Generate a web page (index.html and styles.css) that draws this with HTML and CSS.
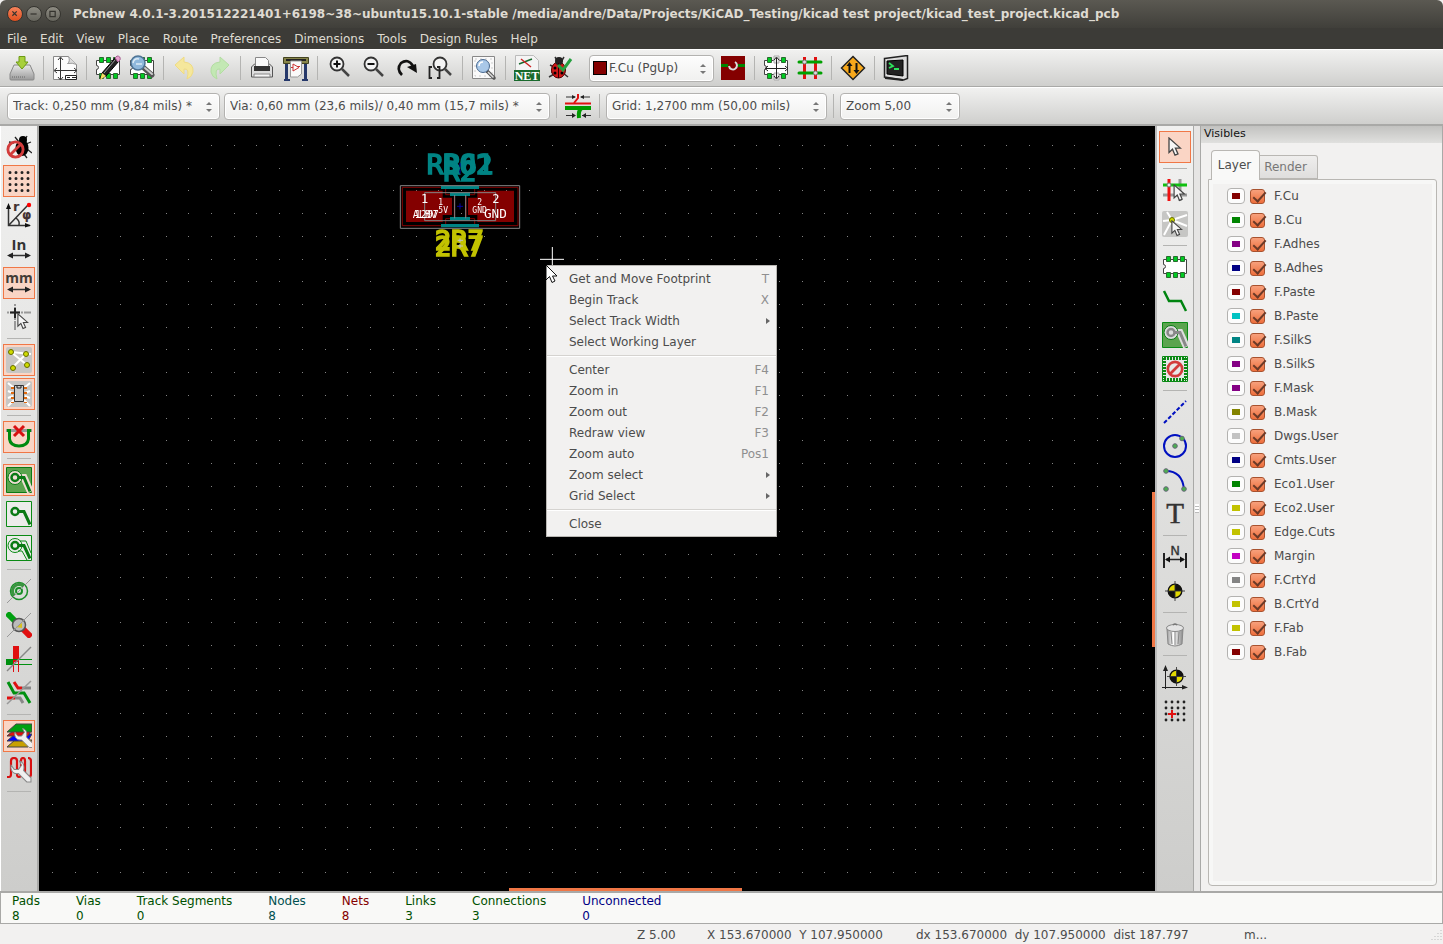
FILE: index.html
```html
<!DOCTYPE html>
<html lang="en">
<head>
    <meta charset="UTF-8">
    <meta name="viewport" content="width=device-width, initial-scale=1.0">
    <title>Pcbnew</title>
    <link rel="stylesheet" href="styles.css">
</head>
<body>
    <header class="titlebar">
        <button class="win close" aria-label="Close"><svg viewBox="0 0 16 16"><path d="M5 5l5 5m0-5l-5 5"/></svg></button>
        <button class="win" aria-label="Minimize"><svg viewBox="0 0 16 16"><path d="M4 8h7"/></svg></button>
        <button class="win" aria-label="Maximize"><svg viewBox="0 0 16 16"><path d="M4.500 5h6v6h-6z"/></svg></button>
        <h1>Pcbnew 4.0.1-3.201512221401+6198~38~ubuntu15.10.1-stable /media/andre/Data/Projects/KiCAD_Testing/kicad test project/kicad_test_project.kicad_pcb</h1>
    </header>
    <nav class="menubar">
        <a href="#">File</a><a href="#">Edit</a><a href="#">View</a><a href="#">Place</a><a href="#">Route</a><a href="#">Preferences</a><a href="#">Dimensions</a><a href="#">Tools</a><a href="#">Design Rules</a><a href="#">Help</a>
    </nav>

    <svg class="defs" width="0" height="0">
        <defs>
            <linearGradient id="tray" x2="0" y2="1"><stop offset="0" stop-color="#e8e8e8"/><stop offset="1" stop-color="#999"/></linearGradient>
            <linearGradient id="steel" x2="1" y2="0"><stop offset="0" stop-color="#999"/><stop offset=".4" stop-color="#fff"/><stop offset="1" stop-color="#888"/></linearGradient>
            <symbol id="chip" viewBox="0 0 26 26">
                <path d="M1.500 5.500h23v14h-23v-5a2 2 0 0 0 0-4z" fill="#fff" stroke="#444"/>
                <path d="M4.500 2.500h4v5h-4zM11.500 2.500h4v5h-4zM18.500 2.500h4v5h-4zM4.500 18.500h4v5h-4zM11.500 18.500h4v5h-4zM18.500 18.500h4v5h-4z" fill="#0c2" stroke="#2a6a30"/>
            </symbol>
            <symbol id="pointer" viewBox="0 0 14 20">
                <path d="M1 1v14.500l3.500-3.300 2.500 6 3-1.300-2.600-5.800h5z" fill="#f6f6f6" stroke="#444" stroke-width="1.300"/>
            </symbol>
            <symbol id="wrench" viewBox="0 0 20 22">
                <path d="M9 1l2 4-3 4-4 0-3-4C0 10 3 14 8 13l8 8h4v-4l-7-7C14 5 13 2 9 1z" fill="#f0f0f0" stroke="#888"/>
            </symbol>
            <symbol id="origin" viewBox="0 0 22 22">
                <circle cx="11" cy="11" r="7.500" fill="#e2d900" stroke="#111" stroke-width="1.500"/>
                <path d="M11 11V3.500a7.500 7.500 0 0 1 7.500 7.500zM11 11v7.500A7.500 7.500 0 0 1 3.500 11z" fill="#111"/>
                <path d="M11 0v22M0 11h22" stroke="#333"/>
            </symbol>
            <symbol id="ban" viewBox="0 0 20 20">
                <circle cx="10" cy="10" r="8" fill="none" stroke="#d33c3c" stroke-width="3"/>
                <path d="M4.500 15.500l11-11" stroke="#d33c3c" stroke-width="3"/>
            </symbol>
        </defs>
    </svg>

    <div class="toolbar">
        <button class="tool" aria-label="Save board"><svg viewBox="0 0 26 26"><path d="M5 10h16l4 9v5q0 1-1 1H2q-1 0-1-1v-5z" fill="url(#tray)" stroke="#888"/><path d="M3 22h13" stroke="#666" stroke-dasharray="1 1"/><path d="M10 1.500h6V7h3l-6 7-6-7h3z" fill="#a8d03c" stroke="#6c9a14"/></svg></button>
        <span class="sep"></span>
        <button class="tool" aria-label="Page settings"><svg viewBox="0 0 26 26"><path d="M1.500 1.500h15l8 8v15h-23z" fill="#fcfcfc" stroke="#888"/><path d="M16.500 1.500q2 5-1 7 5-1 9 1" fill="#ddd" stroke="#999"/><path d="M8.500 3v21M3 15.500h21M6 5l2.500-3L11 5M6 22l2.500 3 2.500-3M5 13l-3 2.500L5 18M22 13l3 2.500-3 2.500" fill="none" stroke="#333"/><path d="M13.500 20.500h11v4h-11z" fill="#fff" stroke="#222"/><path d="M15 22.500h3m2 0h4" stroke="#222"/></svg></button>
        <span class="sep"></span>
        <button class="tool" aria-label="Module editor"><svg viewBox="0 0 26 26"><use href="#chip"/><path d="M20 3l4 3L11 21l-6 3 2-6z" fill="#222" stroke="#000"/><path d="M9 18l11-13" stroke="#999"/><path d="M20 3l2-2q4 0 3 4l-2 2z" fill="#e8a0d0" stroke="#a55c90"/><path d="M7 18l4 3-6 4z" fill="#f4e060"/></svg></button>
        <button class="tool" aria-label="Module viewer"><svg viewBox="0 0 26 26"><use href="#chip"/><path d="M15 13l8 7" stroke="#555" stroke-width="5" stroke-linecap="round"/><path d="M16 13l7 6" stroke="#ccc" stroke-width="2" stroke-linecap="round"/><circle cx="9" cy="8" r="7" fill="#8fb8dc" stroke="#4d7394" stroke-width="1.500"/><path d="M4 8q1-5 6-4M7 9h6" stroke="#dbeaf5" stroke-width="1.500" fill="none"/></svg></button>
        <span class="sep"></span>
        <button class="tool" aria-label="Undo"><svg viewBox="0 0 26 26"><path d="M3 10l9-8v5q10 1 9 10-1 5-6 7 3-11-3-10v5z" fill="#f5e79c" stroke="#efdb83"/></svg></button>
        <button class="tool" aria-label="Redo"><svg viewBox="0 0 26 26"><path d="M23 10l-9-8v5Q4 8 5 17q1 5 6 7-3-11 3-10v5z" fill="#c3e8b4" stroke="#b3dda2"/></svg></button>
        <span class="sep"></span>
        <button class="tool" aria-label="Print"><svg viewBox="0 0 26 26"><path d="M2.500 12l3-3h15l3 3v10h-21z" fill="#ddd" stroke="#555"/><path d="M6.500 2.500h10l3 3V13h-13z" fill="#fafafa" stroke="#888"/><path d="M5 11h16v5H5z" fill="#333"/><path d="M5 19h16v3H5z" fill="#f6f6f6" stroke="#888"/></svg></button>
        <button class="tool" aria-label="Plot"><svg viewBox="0 0 26 26"><path d="M3.500 6v18M22.500 6v18" stroke="#25386a" stroke-width="3"/><path d="M1 25h6M19 25h6" stroke="#25386a" stroke-width="2"/><path d="M.5 2.500h25v6H.5z" fill="#87854a" stroke="#444420"/><path d="M3 5h20" stroke="#222" stroke-width="2"/><path d="M7.500 6h11v13l-4 3h-7z" fill="#fafafa" stroke="#999"/><path d="M10 9v7l6-3.500z" fill="none" stroke="#c33"/><path d="M8 12.500h2m4-1h3" stroke="#c33"/></svg></button>
        <span class="sep"></span>
        <button class="tool" aria-label="Zoom in"><svg viewBox="0 0 26 26"><circle cx="11" cy="9" r="6.500" fill="#f4f4f4" stroke="#333" stroke-width="1.800"/><path d="M16 14l7 7" stroke="#444" stroke-width="2.500"/><path d="M7.500 9h7M11 5.500v7" stroke="#111" stroke-width="2"/></svg></button>
        <button class="tool" aria-label="Zoom out"><svg viewBox="0 0 26 26"><circle cx="11" cy="9" r="6.500" fill="#f4f4f4" stroke="#333" stroke-width="1.800"/><path d="M16 14l7 7" stroke="#444" stroke-width="2.500"/><path d="M7.500 9h7" stroke="#111" stroke-width="2"/></svg></button>
        <button class="tool" aria-label="Redraw"><svg viewBox="0 0 26 26"><path d="M8 20Q2 14 7 8q7-5 12 3" fill="none" stroke="#111" stroke-width="2.600"/><path d="M13 12l9-3 1 9z" fill="#111"/></svg></button>
        <button class="tool" aria-label="Zoom auto"><svg viewBox="0 0 26 26"><circle cx="12" cy="9" r="6.500" fill="#f4f4f4" stroke="#333" stroke-width="1.800"/><path d="M17 14l6 6" stroke="#444" stroke-width="2.500"/><path d="M4 12H1.500v11H4M9 12h2.500v11H9" fill="none" stroke="#222" stroke-width="1.800"/></svg></button>
        <span class="sep"></span>
        <button class="tool" aria-label="Find"><svg viewBox="0 0 26 26"><path d="M1.500 1.500h22v22h-22z" fill="#fafafa" stroke="#888"/><path d="M4 4h17v17H4z" fill="none" stroke="#ccc" stroke-dasharray="2 3"/><path d="M16 16l7 7" stroke="#555" stroke-width="3.500" stroke-linecap="round"/><path d="M17 17l5.500 5.500" stroke="#ddd" stroke-width="1.500"/><circle cx="12" cy="11" r="6.500" fill="#a9c8e8" stroke="#4a6a90"/><path d="M8 11q0-4 4-4" stroke="#fff" fill="none" stroke-width="1.500"/></svg></button>
        <span class="sep"></span>
        <button class="tool" aria-label="Read netlist"><svg viewBox="0 0 26 26"><path d="M1.500.5h18l5 5V16h-23z" fill="#f4f4f4" stroke="#bbb"/><path d="M5 9l13-5" stroke="#196a2d" stroke-width="1.500"/><path d="M7 4l10 8" stroke="#c22" stroke-width="1.500"/><path d="M0 15h26v11H0z" fill="#196a2d"/><text x="13" y="25" font-family="Liberation Serif, serif" font-weight="bold" font-size="12" text-anchor="middle" fill="#fff">NET</text></svg></button>
        <button class="tool" aria-label="Design rules check"><svg viewBox="0 0 26 26"><path d="M2 10l6 3M1 22l7-4M7 2l3 5M16 2l-3 5M3 17h5M20 22l-5-4" stroke="#333" stroke-width="1.500"/><ellipse cx="10.500" cy="15" rx="7" ry="8" fill="#d01818" stroke="#500"/><circle cx="11" cy="6" r="4" fill="#222"/><path d="M10.500 8v15" stroke="#300"/><circle cx="7" cy="13" r="1.500"/><circle cx="7" cy="18" r="1.500"/><circle cx="14" cy="18" r="1.500"/><path d="M10 10l5 5 8-11" fill="none" stroke="#26a040" stroke-width="3"/></svg></button>
        <span class="combo layer"><i class="chosen"></i><select aria-label="Working layer"><option>F.Cu (PgUp)</option></select></span>
        <button class="tool" aria-label="Layer pair"><svg viewBox="0 0 26 26"><path d="M1 1h24v24H1z" fill="#840000"/><path d="M1 10.500h24" stroke="#008400" stroke-width="3"/><circle cx="13" cy="10.500" r="5" fill="#840000"/><path d="M15 7a4 4 0 1 1-6 4" fill="none" stroke="#ddd" stroke-width="2"/></svg></button>
        <span class="sep"></span>
        <button class="tool" aria-label="Footprint mode"><svg viewBox="0 0 26 26"><use href="#chip"/><path d="M11 1h5v7h-5zM11 18h5v7h-5z" fill="#eee" stroke="#aaa"/><path d="M13.500 3v20M3 13.500h20" stroke="#222"/><path d="M11 5l2.500-3L16 5M11 21l2.500 3 2.500-3M5 11l-3 2.500L5 16M22 11l3 2.500-3 2.500" fill="none" stroke="#222"/></svg></button>
        <button class="tool" aria-label="Track mode"><svg viewBox="0 0 26 26"><path d="M7.500 2v22M18.500 2v22" stroke="#e01010" stroke-width="3"/><path d="M2 7h22M2 18h22" stroke="#00a000" stroke-width="3" stroke-linecap="round"/><circle cx="7.500" cy="7" r="2" fill="#ddd" stroke="#777"/><circle cx="18.500" cy="18" r="2" fill="#ddd" stroke="#777"/></svg></button>
        <span class="sep"></span>
        <button class="tool" aria-label="Autoroute"><svg viewBox="0 0 26 26"><path d="M13 1.500L24.500 13 13 24.500 1.500 13z" fill="#f7a81b" stroke="#222" stroke-width="1.500"/><path d="M9.500 18V9M16.500 8v9" stroke="#111" stroke-width="2"/><path d="M6.500 11l3-4 3 4zM13.500 15h6l-3 4z" fill="#111"/></svg></button>
        <span class="sep"></span>
        <button class="tool" aria-label="Scripting console"><svg viewBox="0 0 26 26"><path d="M1.500 3.500l23-3v23l-4 1.500-19-3z" fill="#ddd" stroke="#222" stroke-width="1.500"/><path d="M4 6l16-1v16L4 19z" fill="#222" stroke="#000"/><path d="M2 23l18 2" stroke="#222" stroke-width="2"/><path d="M6 8l4 3-4 2M11 14h5" fill="none" stroke="#2ee25c" stroke-width="1.800"/></svg></button>
    </div>

    <div class="toolbar second">
        <span class="combo track"><select aria-label="Track width"><option>Track: 0,250 mm (9,84 mils) *</option></select></span>
        <span class="combo via"><select aria-label="Via size"><option>Via: 0,60 mm (23,6 mils)/ 0,40 mm (15,7 mils) *</option></select></span>
        <span class="sep"></span>
        <button class="tool" aria-label="Auto track width"><svg viewBox="0 0 26 26"><path d="M0 10.500h26" stroke="#e01010" stroke-width="2"/><path d="M0 15h26" stroke="#009a00" stroke-width="4"/><path d="M13 1v4l-4 5" fill="none" stroke="#e01010" stroke-width="2"/><path d="M17 15q-4 2-3 10" fill="none" stroke="#009a00" stroke-width="4"/><path d="M1 4h9M16 4h9M1 22.500h9M17 22.500h9" stroke="#333"/><path d="M7 2l4 2-4 2zM19 2l-4 2 4 2zM7 20l4 2.500L7 25zM21 20l-4 2.500 4 2.500z" fill="#222"/></svg></button>
        <span class="sep"></span>
        <span class="combo grid"><select aria-label="Grid"><option>Grid: 1,2700 mm (50,00 mils)</option></select></span>
        <span class="sep"></span>
        <span class="combo zoom"><select aria-label="Zoom"><option>Zoom 5,00</option></select></span>
    </div>

    <main class="work">
        <div class="side left">
            <button class="tool" aria-label="DRC off"><svg viewBox="0 0 26 26"><path d="M9 3l4 5M21 2l-3 6M20 10l5-2M21 15l5 4M18 20l3 4M8 9l-5-1" stroke="#222" stroke-width="1.300"/><ellipse cx="16" cy="14" rx="6.500" ry="8" fill="#000"/><circle cx="17" cy="6" r="4"/><use href="#ban" x="0" y="6" width="19" height="19"/></svg></button>
            <button class="tool on" aria-label="Show grid"><svg viewBox="0 0 26 26"><path d="M4 4.500h19M4 10.500h19M4 16.500h19M4 22.500h19" stroke="#222" stroke-width="3" stroke-linecap="round" stroke-dasharray="0 6"/></svg></button>
            <button class="tool" aria-label="Polar coordinates"><svg viewBox="0 0 26 26"><path d="M2.500 4v19.500H24M3 23L22 3M10 16q4 3 3 7" fill="none" stroke="#333" stroke-width="1.500"/><path d="M0 7l2.500-6L5 7zM19 21l6 2.500-6 2z" fill="#111"/><circle cx="23" cy="3" r="2.200" fill="#f00"/><text x="7" y="9" font-size="13" font-weight="bold" fill="#433">r</text><text x="16" y="17" font-size="12" font-weight="bold" fill="#433">φ</text></svg></button>
            <button class="tool" aria-label="Inches"><svg viewBox="0 0 26 26"><text x="13" y="14" font-size="15" font-weight="bold" text-anchor="middle" fill="#333" font-family="Open Sans, sans-serif">In</text><path d="M3 19.500h20" stroke="#333" stroke-width="1.500"/><path d="M1 19.500l6-3v6zM25 19.500l-6-3v6z" fill="#222"/></svg></button>
            <button class="tool on" aria-label="Millimetres"><svg viewBox="0 0 26 26"><text x="13" y="13" font-size="14" font-weight="bold" text-anchor="middle" fill="#443c36" font-family="Open Sans, sans-serif">mm</text><path d="M3 19.500h20" stroke="#333" stroke-width="1.500"/><path d="M1 19.500l6-3v6zM25 19.500l-6-3v6z" fill="#222"/></svg></button>
            <button class="tool" aria-label="Cursor shape"><svg viewBox="0 0 26 26"><path d="M9 0v26M1 8.500h24" stroke="#999" stroke-width="2" stroke-dasharray="2 1 10 1"/><path d="M9 4v10M4 8.500h10" stroke="#222" stroke-width="2"/><use href="#pointer" x="11" y="9" width="12" height="17"/></svg></button>
            <span class="sep"></span>
            <button class="tool on" aria-label="Show ratsnest"><svg viewBox="0 0 26 26"><rect width="26" height="26" rx="2" fill="#c8c6c4"/><path d="M5 5l16 13M20 7L7 20M5 5l20 2" stroke="#fff" stroke-width="2"/><g fill="#d0dc00" stroke="#666c00"><circle cx="5" cy="5" r="2.500"/><circle cx="20" cy="7" r="2.500"/><circle cx="21" cy="18" r="2.500"/><circle cx="7" cy="21" r="2.500"/></g></svg></button>
            <button class="tool on" aria-label="Module ratsnest"><svg viewBox="0 0 26 26"><rect width="26" height="26" rx="2" fill="#c8c6c4"/><path d="M2 2l6 5M2 10l5 2M2 17l5-2M2 25l6-6M24 2l-6 5M24 10l-5 2M24 17l-5-2M24 25l-6-6" stroke="#fff" stroke-width="2"/><path d="M6.500 6v16M19.500 6v16" stroke="#e06a10" stroke-width="3" stroke-dasharray="2 3"/><path d="M8.500 4.500h9v16h-9z" fill="#ccc" stroke="#333"/><path d="M11 5v2h4V5" fill="none" stroke="#222"/></svg></button>
            <span class="sep"></span>
            <button class="tool on" aria-label="Auto delete track"><svg viewBox="0 0 26 26"><path d="M0 6.500h26" stroke="#999" stroke-width="3"/><path d="M1 6.500h2.500V15q1 7 9.500 7t9.500-7V6.500H25" fill="none" stroke="#008a10" stroke-width="3"/><path d="M8 2l10 10M18 2L8 12" stroke="#d81010" stroke-width="3"/></svg></button>
            <span class="sep"></span>
            <button class="tool on" aria-label="Show zones"><svg viewBox="0 0 26 26"><path d="M.5.5h25v25H.5z" fill="#5ba44e" stroke="#0a7a14"/><path d="M9 10.500h9L24.500 25" fill="none" stroke="#f0ddd4" stroke-width="7"/><circle cx="9" cy="10.500" r="7" fill="#f0ddd4" stroke="#0a7a14"/><path d="M13 10.500h5l6 14" fill="none" stroke="#0a7a14" stroke-width="3"/><circle cx="9" cy="10.500" r="3.500" fill="none" stroke="#0a7a14" stroke-width="2.500"/></svg></button>
            <button class="tool" aria-label="Hide zones"><svg viewBox="0 0 26 26"><path d="M.5.5h25v25H.5z" fill="#ececea" stroke="#0a8a14"/><path d="M13 10.500h5l6 13" fill="none" stroke="#0a7a14" stroke-width="3"/><circle cx="9" cy="10.500" r="3.500" fill="none" stroke="#0a7a14" stroke-width="2.500"/></svg></button>
            <button class="tool" aria-label="Zone outlines"><svg viewBox="0 0 26 26"><path d="M.5.5h25v25H.5z" fill="#ececea" stroke="#0a8a14"/><path d="M14 6h6l5 12M12 16h4l5 9" fill="none" stroke="#0a8a14"/><circle cx="9" cy="10.500" r="7" fill="none" stroke="#0a8a14"/><path d="M13 10.500h5l6 13" fill="none" stroke="#0a7a14" stroke-width="3"/><circle cx="9" cy="10.500" r="3.500" fill="none" stroke="#0a7a14" stroke-width="2.500"/></svg></button>
            <span class="sep"></span>
            <button class="tool" aria-label="Pad sketch"><svg viewBox="0 0 26 26"><circle cx="13" cy="13" r="8.500" fill="none" stroke="#1a8f28" stroke-width="1.500"/><path d="M7 19A8.500 8.500 0 0 1 19 7z" fill="#3a9440"/><circle cx="13" cy="13" r="5" fill="#d8e4d8"/><circle cx="13" cy="13" r="3" fill="none" stroke="#1a8f28" stroke-width="2"/><path d="M1 25L25 1" stroke="#999"/></svg></button>
            <button class="tool" aria-label="Via sketch"><svg viewBox="0 0 26 26"><path d="M1 1l10 10" stroke="#00a010" stroke-width="6"/><path d="M15 15l10 10" stroke="#e01010" stroke-width="6"/><circle cx="13" cy="13" r="6.500" fill="#bbb" stroke="#555" stroke-width="1.500"/><path d="M10 15l6-4v5z" fill="#d8c020"/><path d="M1 25L25 1" stroke="#999"/></svg></button>
            <button class="tool" aria-label="Track sketch"><svg viewBox="0 0 26 26"><path d="M10 0v16" stroke="#e01010" stroke-width="6"/><path d="M0 16h8" stroke="#009010" stroke-width="6"/><path d="M8 13.500h18M8 18.500h18" stroke="#009010"/><path d="M7.500 14v12M12.500 14v12" stroke="#e01010"/><path d="M1 25L25 1" stroke="#888" stroke-width="1.500"/></svg></button>
            <button class="tool" aria-label="High contrast"><svg viewBox="0 0 26 26"><path d="M8 2l4 6h4" fill="none" stroke="#e01010" stroke-width="3"/><path d="M16 8h9" stroke="#888" stroke-width="3"/><path d="M2 2l6 11h10l6 10" fill="none" stroke="#009010" stroke-width="3"/><path d="M1 18h8" stroke="#e01010" stroke-width="3"/><path d="M9 18h5l3 5" fill="none" stroke="#888" stroke-width="3"/><path d="M1 24L25 1" stroke="#999" stroke-width="1.500"/></svg></button>
            <span class="sep"></span>
            <button class="tool on" aria-label="Layers manager"><svg viewBox="0 0 26 26"><path d="M1 24l8-7h17l-4 7z" fill="#c8a000" stroke="#444"/><path d="M1 18l8-7h17l-4 7z" fill="#00f" stroke="#444"/><path d="M1 13l8-7h17l-4 7z" fill="#e01010" stroke="#444"/><path d="M1 9l9-8h16v8z" fill="#00a010" stroke="#444"/><use href="#wrench" x="8" y="4" width="19" height="22"/></svg></button>
            <button class="tool" aria-label="Microwave tools"><svg viewBox="0 0 26 26"><path d="M1 20h2q2 0 2-3V4q0-3 3-3t3 3v13q0 3 2 3t2-3V4q0-3 2-3t2 3v13q0 3 3 3t3-3V4q0-3-3-3" fill="none" stroke="#d81010" stroke-width="2.200"/><use href="#wrench" x="3" y="3" width="23" height="23"/></svg></button>
            <span class="sep"></span>
        </div>

        <section class="board">
            <canvas id="grid"></canvas>
            <svg class="footprint" viewBox="0 0 600 450" font-family="DejaVu Sans Mono, monospace">
                <g font-size="82" fill="#008484" stroke="#008484" stroke-width="5">
                    <text x="110" y="88">RRO2</text>
                    <text x="162" y="88">B61</text>
                    <text x="160" y="108">R2</text>
                </g>
                <g font-size="82" fill="#c2c200" stroke="#c2c200" stroke-width="5">
                    <text x="134" y="314">2R7</text>
                    <text x="134" y="334">2R7</text>
                </g>
                <path d="M48 137h110v94H48zM262 137h110v94H262z" fill="#840000"/>
                <path d="M104 158h82v52h-82zM234 158h82v52h-82z" fill="#840000"/>
                <path d="M37 127h130v22h26v72h-26v21H37zM384 127H254v22h-26v72h26v21h130z" fill="none" stroke="#840000" stroke-width="3"/>
                <path d="M153 122h114v10H153zM180 143h60v10h-60zM180 216h60v10h-60zM153 237h114v10H153z" fill="#008484"/>
                <path d="M31 122h358v128H31zM104 143h213v84H104zM194 150v70M227 150v70" fill="none" stroke="#848484" stroke-width="3"/>
                <path d="M201 184h18M210 175v18M210 54v12M210 74v12" stroke="#0000a0" stroke-width="3"/>
                <path d="M203 286h16M210 280v12M203 303h16M210 297v12" stroke="#c2c2c2" stroke-width="3"/>
                <g fill="#fff">
                    <text x="93" y="174" font-size="36">1</text>
                    <text x="307" y="174" font-size="36">2</text>
                    <text x="145" y="180" font-size="24">1</text>
                    <text x="262" y="180" font-size="24">2</text>
                    <text x="68" y="219" font-size="30">ALBV</text>
                    <text x="74" y="219" font-size="30">1207</text>
                    <text x="145" y="205" font-size="24">5V</text>
                    <text x="247" y="205" font-size="24">GND</text>
                    <text x="282" y="219" font-size="38">GND</text>
                </g>
                <path d="M450 343h72M487 306v72" stroke="#fff" stroke-width="3"/>
            </svg>
            <i class="vscroll"></i>
            <i class="hscroll"></i>

            <div class="popup" role="menu">
                <button>Get and Move Footprint<kbd>T</kbd></button>
                <button>Begin Track<kbd>X</kbd></button>
                <button class="more">Select Track Width</button>
                <button>Select Working Layer</button>
                <hr>
                <button>Center<kbd>F4</kbd></button>
                <button>Zoom in<kbd>F1</kbd></button>
                <button>Zoom out<kbd>F2</kbd></button>
                <button>Redraw view<kbd>F3</kbd></button>
                <button>Zoom auto<kbd>Pos1</kbd></button>
                <button class="more">Zoom select</button>
                <button class="more">Grid Select</button>
                <hr>
                <button>Close</button>
            </div>
            <svg class="mouse" viewBox="0 0 12 20"><path d="M0 1v15l3.500-3.500L6 18.500l3-1.500-2.500-5H11z" fill="#fff" stroke="#111"/></svg>
        </section>

        <div class="side right">
            <button class="tool on" aria-label="Select"><svg viewBox="0 0 26 26"><use href="#pointer" x="6" y="3" width="14" height="20"/></svg></button>
            <span class="sep"></span>
            <button class="tool" aria-label="Highlight net"><svg viewBox="0 0 26 26"><path d="M18 2v22M1 18h24" stroke="#999" stroke-width="3"/><path d="M7 2v22" stroke="#f01010" stroke-width="3"/><path d="M1 8h24" stroke="#10c010" stroke-width="3"/><circle cx="7" cy="8" r="2" fill="#eee" stroke="#777"/><use href="#pointer" x="11" y="7" width="13" height="18"/></svg></button>
            <button class="tool" aria-label="Local ratsnest"><svg viewBox="0 0 26 26"><rect width="26" height="26" rx="2" fill="#c6c6c4"/><path d="M10 9L2 24M10 9l15-5M10 9l15 6M10 9L5 1M10 9l-9 1" stroke="#fff" stroke-width="2"/><circle cx="10" cy="9" r="2.500" fill="#d0dc00" stroke="#666c00"/><use href="#pointer" x="9" y="9" width="12" height="17"/></svg></button>
            <span class="sep"></span>
            <button class="tool" aria-label="Add footprint"><svg viewBox="0 0 26 26"><use href="#chip"/></svg></button>
            <button class="tool" aria-label="Route tracks"><svg viewBox="0 0 26 26"><path d="M2 3l5 10h12l5 10" fill="none" stroke="#008410" stroke-width="2.500"/></svg></button>
            <button class="tool" aria-label="Add zone"><svg viewBox="0 0 26 26"><path d="M.5.5h25v25H.5z" fill="#5ba44e" stroke="#0a8a14"/><path d="M9 10.500h9L24.500 25" fill="none" stroke="#ddd" stroke-width="7"/><circle cx="9" cy="10.500" r="7" fill="#ddd" stroke="#0a7a14"/><path d="M13 10.500h5l6 14" fill="none" stroke="#888" stroke-width="3"/><circle cx="9" cy="10.500" r="3.500" fill="none" stroke="#888" stroke-width="2.500"/></svg></button>
            <button class="tool" aria-label="Add keepout"><svg viewBox="0 0 26 26"><path d="M.5.5h25v25H.5z" fill="#e8e8e8" stroke="#0a8a14"/><path d="M2 2.500h22M2 23.500h22M2.500 2v22M23.500 2v22" stroke="#0a8a14" stroke-width="3" stroke-dasharray="2 1"/><path d="M4 4h18v18H4z" fill="#e8e8e8"/><use href="#ban" x="4" y="4" width="18" height="18"/></svg></button>
            <span class="sep"></span>
            <button class="tool" aria-label="Graphic line"><svg viewBox="0 0 26 26"><path d="M2 24L24 2" stroke="#0010c0" stroke-width="2" stroke-dasharray="4 2"/></svg></button>
            <button class="tool" aria-label="Graphic circle"><svg viewBox="0 0 26 26"><circle cx="13" cy="13" r="11" fill="none" stroke="#0010c0" stroke-width="2"/><g fill="#4caf50" stroke="#667"><circle cx="13" cy="13" r="2.300"/><circle cx="20" cy="5.500" r="2.300"/></g></svg></button>
            <button class="tool" aria-label="Graphic arc"><svg viewBox="0 0 26 26"><path d="M4 4q16 0 18 18" fill="none" stroke="#0010c0" stroke-width="2"/><g fill="#4caf50" stroke="#667"><circle cx="4" cy="4" r="2.300"/><circle cx="4" cy="22" r="2.300"/><circle cx="22" cy="22" r="2.300"/></g></svg></button>
            <button class="tool" aria-label="Add text"><svg viewBox="0 0 26 26"><text x="13" y="22" font-size="29" text-anchor="middle" fill="#333" stroke="#333" stroke-width=".5" font-family="Liberation Serif, serif">T</text></svg></button>
            <span class="sep"></span>
            <button class="tool" aria-label="Add dimension"><svg viewBox="0 0 26 26"><text x="13" y="11" font-size="13" text-anchor="middle" fill="#333" stroke="#333" stroke-width=".3">N</text><path d="M2 9v15M24 9v15" stroke="#222" stroke-width="2"/><path d="M4 15.500h18" stroke="#222" stroke-width="1.500"/><path d="M3 15.500l5-3v6zM23 15.500l-5-3v6z" fill="#111"/></svg></button>
            <button class="tool" aria-label="Layer target"><svg viewBox="0 0 26 26"><use href="#origin" x="3" y="3" width="20" height="20"/></svg></button>
            <span class="sep"></span>
            <button class="tool" aria-label="Delete"><svg viewBox="0 0 26 26"><path d="M5 8l1 15q7 4 14 0l1-15z" fill="url(#steel)" stroke="#888"/><path d="M9 11l1 12M13 11v13M17 11l-1 12" stroke="#888"/><ellipse cx="13" cy="7" rx="8.500" ry="3.500" fill="#e4e4e4" stroke="#888"/><path d="M11 4q2-2 4 0" fill="none" stroke="#777" stroke-width="1.500"/></svg></button>
            <span class="sep"></span>
            <button class="tool" aria-label="Drill origin"><svg viewBox="0 0 26 26"><path d="M3.500 3v22M0 23.500h23" stroke="#222"/><path d="M1 7l2.500-6L6 7zM20 21l6 2.500-6 2z" fill="#222"/><use href="#origin" x="5" y="3" width="19" height="19"/></svg></button>
            <button class="tool" aria-label="Grid origin"><svg viewBox="0 0 26 26"><path d="M4 4h19M4 10h19M4 16h19M4 22h19" stroke="#222" stroke-width="2.800" stroke-linecap="round" stroke-dasharray="0 6"/><path d="M10 12v8M6 16h8" stroke="#e01010" stroke-width="2"/></svg></button>
        </div>

        <div class="sash"></div>

        <aside class="visibles">
            <h2>Visibles</h2>
            <div class="tabs">
                <button class="tab active">Layer</button><button class="tab">Render</button>
            </div>
            <div class="page" id="layers"></div>
        </aside>
    </main>

    <section class="messages">
        <p>Pads<br>8</p>
        <p>Vias<br>0</p>
        <p>Track Segments<br>0</p>
        <p class="nodes">Nodes<br>8</p>
        <p class="nets">Nets<br>8</p>
        <p>Links<br>3</p>
        <p>Connections<br>3</p>
        <p class="open">Unconnected<br>0</p>
    </section>
    <footer class="statusbar">
        <span></span>
        <span>Z 5.00</span>
        <span>X 153.670000&nbsp; Y 107.950000</span>
        <span>dx 153.670000&nbsp; dy 107.950000&nbsp; dist 187.797</span>
        <span>m...</span>
        <svg class="grip" viewBox="0 0 12 12"><path d="M10 1v10M7 4v7M4 7v4M1 10v1" stroke="#bbb" stroke-width="1" stroke-dasharray="1 2"/></svg>
    </footer>
    <script src="script.js"></script>
</body>
</html>
```
FILE: styles.css
```css
* {
    box-sizing: border-box;
}
body {
    display: flex;
    flex-direction: column;
    height: 100vh;
    margin: 0;
    background: #f2f1f0;
    color: #4c4c4c;
    font-family: "DejaVu Sans", sans-serif;
    font-size: 12px;
    overflow: hidden;
}
button, select {
    font: inherit;
    color: inherit;
    border: 0;
    padding: 0;
    background: none;
}
.defs {
    position: absolute;
}

/* title and menu */
.titlebar {
    display: flex;
    align-items: center;
    gap: 3px;
    height: 28px;
    flex: none;
    padding: 0 7px;
    background: linear-gradient(#5b5952, #403f3a);
    border-radius: 6px 6px 0 0;
}
.titlebar h1 {
    margin: 0 0 0 9px;
    font-size: 12px;
    font-weight: bold;
    line-height: 16px;
    color: #dfdbd2;
    white-space: nowrap;
}
.win {
    width: 16px;
    height: 16px;
    border: 1px solid #35342f;
    border-radius: 50%;
    background: linear-gradient(#8e8c83, #66655d);
}
.win svg {
    display: block;
    fill: none;
    stroke: #35342f;
    stroke-width: 1.4;
}
.win.close {
    background: linear-gradient(#f5835c, #e0501f);
}
.menubar {
    display: flex;
    gap: 13px;
    height: 21px;
    flex: none;
    padding: 0 7px;
    background: #3c3b37;
    line-height: 22px;
}
.menubar a {
    color: #dfdbd2;
    text-decoration: none;
}

/* toolbars */
.toolbar {
    display: flex;
    align-items: center;
    gap: 2px;
    height: 38px;
    flex: none;
    padding-left: 6px;
    background: linear-gradient(#f1f1f0, #cfcfcd);
    border-top: 1px solid #fff;
    border-bottom: 1px solid #a9a9a7;
}
.toolbar.second {
    height: 39px;
    border-bottom-width: 2px;
}
.tool {
    width: 32px;
    height: 32px;
    flex: none;
    display: flex;
    align-items: center;
    justify-content: center;
}
.tool svg {
    width: 26px;
    height: 26px;
    flex: none;
}
.tool.on {
    border: 1px solid #f07746;
    background: #fad5c5;
}
.sep {
    flex: none;
    width: 1px;
    height: 24px;
    margin: 0 3px;
    background: #b4b4b2;
}
.combo {
    position: relative;
    display: flex;
    align-items: center;
    height: 27px;
    margin: 0 1px;
    border: 1px solid #b3b2b0;
    border-radius: 4px;
    background: linear-gradient(#fdfdfd, #f0f0ef);
    box-shadow: inset 0 0 0 1px #fff;
}
.combo select {
    flex: 1;
    min-width: 0;
    height: 25px;
    padding-left: 5px;
    appearance: none;
}
.combo::before, .combo::after {
    content: "";
    position: absolute;
    right: 7px;
    border: 3px solid transparent;
    pointer-events: none;
}
.combo::before {
    top: 5px;
    border-bottom-color: #777;
}
.combo::after {
    bottom: 4px;
    border-top-color: #777;
}
.combo.layer {
    width: 125px;
    margin-left: 10px;
}
.combo.layer select {
    padding-left: 2px;
}
.chosen {
    width: 14px;
    height: 14px;
    margin-left: 3px;
    border: 1px solid #000;
    background: #840000;
}
.combo.track { width: 213px; }
.combo.via { width: 326px; }
.combo.grid { width: 221px; }
.combo.zoom { width: 120px; }

/* work area */
.work {
    display: flex;
    flex: 1;
    min-height: 0;
}
.side {
    display: flex;
    flex-direction: column;
    align-items: center;
    gap: 2px;
    width: 39px;
    flex: none;
    padding-top: 5px;
    background: linear-gradient(#f1f1f0, #cdcdcb);
    border-left: 1px solid #fff;
    border-right: 2px solid #a9a9a7;
}
.side.right {
    border-left: 2px solid #bbb;
    border-right-width: 1px;
}
.side .sep {
    width: 24px;
    height: 1px;
    margin: 3px 0;
}
.board {
    position: relative;
    flex: 1;
    min-width: 0;
    background: #000;
    overflow: hidden;
}
.board canvas {
    display: block;
}
.footprint {
    position: absolute;
    left: 351px;
    top: 19px;
    width: 200px;
    height: 150px;
}
.vscroll, .hscroll {
    position: absolute;
    background: #f07746;
}
.vscroll {
    right: 0;
    top: 366px;
    width: 3px;
    height: 155px;
}
.hscroll {
    left: 470px;
    bottom: 0;
    width: 233px;
    height: 3px;
}
.mouse {
    position: absolute;
    left: 507px;
    top: 138px;
    width: 12px;
    height: 20px;
}

/* context menu */
.popup {
    position: absolute;
    left: 507px;
    top: 139px;
    width: 231px;
    padding: 2px 0;
    border: 1px solid #b9b7b3;
    background: #f2f1f0;
}
.popup button {
    display: flex;
    justify-content: space-between;
    align-items: center;
    width: 100%;
    height: 21px;
    padding: 0 7px 0 22px;
}
.popup kbd {
    font: inherit;
    color: #8f8f8f;
}
.popup .more::after {
    content: "";
    margin-right: -4px;
    border: 3px solid transparent;
    border-left: 4px solid #666;
}
.popup hr {
    height: 2px;
    margin: 3px 0 2px;
    border: 0;
    border-top: 1px solid #d5d3d0;
    background: #fff;
}

/* visibles panel */
.sash {
    width: 6px;
    flex: none;
    background: repeating-linear-gradient(#fff 0 2px, #bbb 2px 3px) center / 4px 9px no-repeat #e6e5e4;
}
.visibles {
    display: flex;
    flex-direction: column;
    width: 243px;
    flex: none;
    padding-bottom: 5px;
    border-left: 1px solid #a9a9a7;
    border-right: 1px solid #a9a9a7;
}
.visibles h2 {
    height: 17px;
    margin: 0;
    padding-left: 3px;
    background: linear-gradient(#c2c2c0, #e0e0de);
    color: #111;
    font-size: 11px;
    font-weight: normal;
    line-height: 15px;
}
.tabs {
    display: flex;
    align-items: flex-end;
    height: 36px;
    margin: 0 5px 0 7px;
    padding-left: 3px;
}
.tab {
    height: 24px;
    width: 58px;
    padding-right: 6px;
    border: 1px solid #b9b7b3;
    border-left: 0;
    border-radius: 0 3px 0 0;
    background: linear-gradient(#efeeed, #dfdedd);
    color: #777;
}
.tab.active {
    position: relative;
    z-index: 1;
    width: 49px;
    height: 30px;
    padding: 0 6px 2px 4px;
    margin-bottom: -1px;
    border-left: 1px solid #b9b7b3;
    border-bottom: 0;
    border-radius: 4px 4px 0 0;
    background: #f9f9f8;
    color: #4c4c4c;
}
.page {
    flex: 1;
    margin: 0 5px 0 7px;
    padding-top: 4px;
    border: 1px solid #b9b7b3;
    border-radius: 0 3px 4px 4px;
    box-shadow: inset 0 0 0 4px #f7f7f6;
}
.row {
    display: flex;
    align-items: center;
    height: 24px;
    padding-left: 18px;
}
.swatch {
    display: flex;
    align-items: center;
    justify-content: center;
    width: 18px;
    height: 16px;
    border: 1px solid #b3b2b0;
    border-radius: 4px;
    background: #fcfcfc;
}
.swatch i {
    width: 8px;
    height: 6px;
}
.row input {
    position: relative;
    appearance: none;
    width: 15px;
    height: 15px;
    margin: 0 9px 0 5px;
    border: 1px solid #a8522f;
    border-radius: 3px;
    background: linear-gradient(#f7a07c, #ee6f3c);
}
.row input:checked::before {
    content: "";
    position: absolute;
    left: 5px;
    top: -1px;
    width: 5px;
    height: 11px;
    border: solid #6b3a28;
    border-width: 0 2px 2px 0;
    transform: rotate(42deg);
}

/* bottom */
.messages {
    display: flex;
    gap: 36px;
    height: 33px;
    flex: none;
    padding: 1px 0 0 11px;
    border: 1px solid #a9a9a7;
    border-top-width: 2px;
    background: #f9f9f7;
    color: #005000;
    line-height: 15px;
}
.messages p {
    margin: 0;
}
.messages .nodes { color: #005050; }
.messages .nets { color: #840000; }
.messages .open { color: #000084; }
.statusbar {
    display: grid;
    grid-template-columns: 1fr 70px 209px 328px 187px 12px;
    height: 20px;
    flex: none;
    line-height: 22px;
    white-space: nowrap;
}
.grip {
    width: 12px;
    height: 12px;
    align-self: center;
}
```
FILE: script.js
```js
const layers = [
    ["F.Cu", "#840000"], ["B.Cu", "#008400"], ["F.Adhes", "#840084"], ["B.Adhes", "#000084"],
    ["F.Paste", "#840000"], ["B.Paste", "#00c2c2"], ["F.SilkS", "#008484"], ["B.SilkS", "#840084"],
    ["F.Mask", "#840084"], ["B.Mask", "#848400"], ["Dwgs.User", "#c2c2c2"], ["Cmts.User", "#000084"],
    ["Eco1.User", "#008400"], ["Eco2.User", "#c2c200"], ["Edge.Cuts", "#c2c200"], ["Margin", "#c200c2"],
    ["F.CrtYd", "#848484"], ["B.CrtYd", "#c2c200"], ["F.Fab", "#c2c200"], ["B.Fab", "#840000"]
];

document.getElementById("layers").innerHTML = layers.map(([name, color], i) => `
    <div class="row">
        <button class="swatch" aria-label="${name} color"><i style="background:${color}"></i></button>
        <input type="checkbox" id="layer${i}" checked>
        <label for="layer${i}">${name}</label>
    </div>`).join("");

// grid dots of the board
const canvas = document.getElementById("grid");
const step = 22.72;

function drawGrid() {
    const board = canvas.parentElement;
    canvas.width = board.clientWidth;
    canvas.height = board.clientHeight;
    const ctx = canvas.getContext("2d");
    ctx.fillStyle = "#848484";
    for (let x = 13; x < canvas.width; x += step) {
        for (let y = 19; y < canvas.height; y += step) {
            ctx.fillRect(Math.round(x), Math.round(y), 1, 1);
        }
    }
}

drawGrid();
window.addEventListener("resize", drawGrid);
```
